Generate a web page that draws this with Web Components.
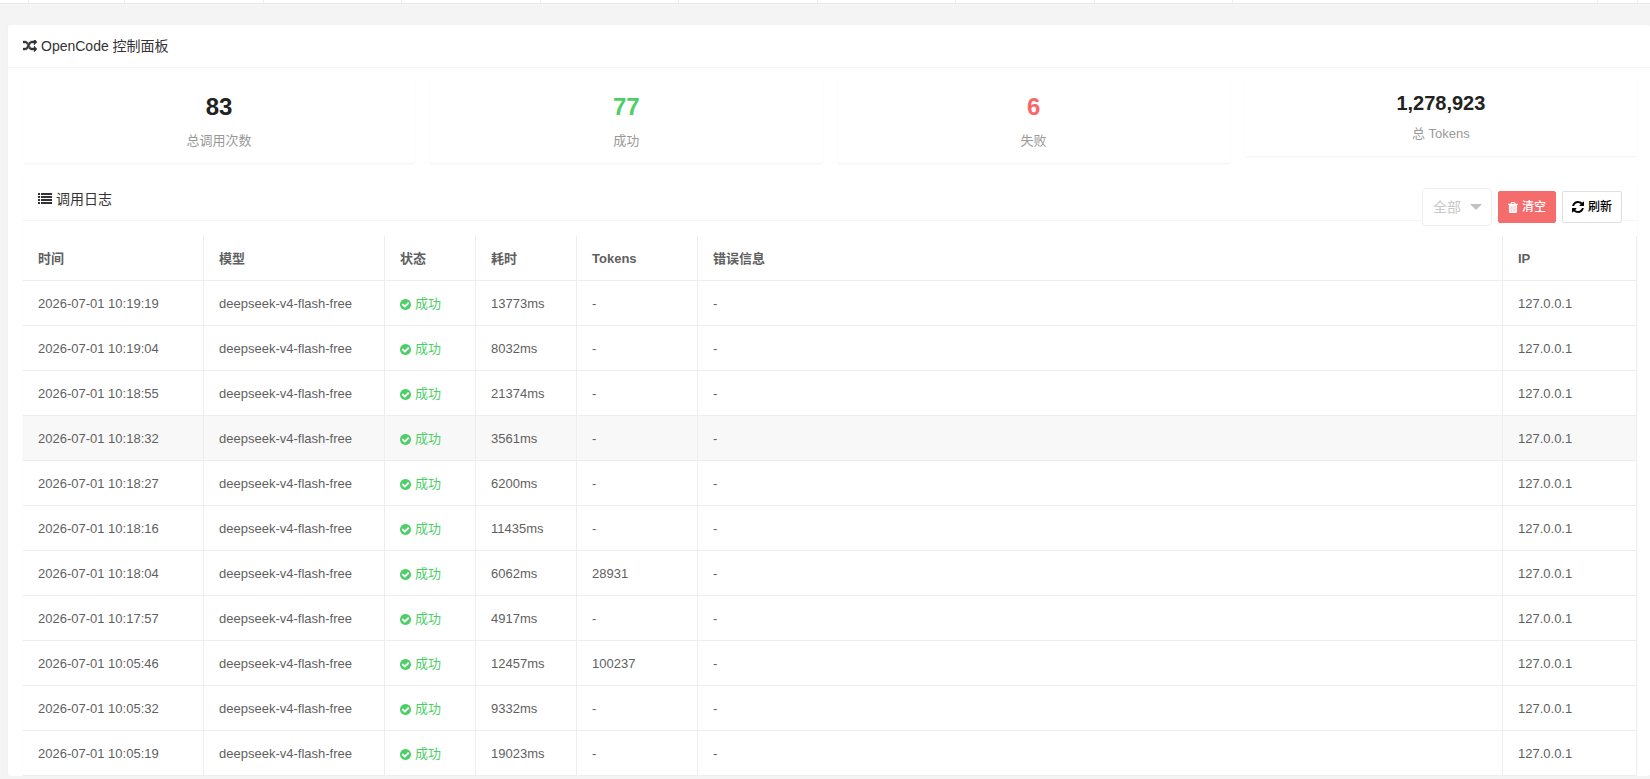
<!DOCTYPE html>
<html lang="zh-CN">
<head>
<meta charset="UTF-8">
<meta name="viewport" content="width=device-width, initial-scale=1.0">
<title>OpenCode 控制面板</title>
<style>
    body {
        margin: 0;
        background-color: #f4f4f4;
        color: #333;
        font: 14px/24px "Liberation Sans", "Noto Sans CJK SC", sans-serif;
    }

    main {
        padding: 21px 0 0 8px;
    }

    .page {
        --body-padding: 10px 13px 0 15px;
    }

    .log {
        --body-padding: 15px 0 0;
    }
</style>
</head>
<body>
    <tab-strip></tab-strip>
    <main>
        <panel-card class="page">
            <ui-icon slot="title" name="random"></ui-icon>
            <span slot="title">OpenCode 控制面板</span>
            <stat-row>
                <stat-card label="总调用次数">83</stat-card>
                <stat-card label="成功" style="--stat-color: #4dcf67">77</stat-card>
                <stat-card label="失败" style="--stat-color: #f96868">6</stat-card>
                <stat-card label="总 Tokens" compact>1,278,923</stat-card>
            </stat-row>
            <panel-card class="log">
                <ui-icon slot="title" name="list"></ui-icon>
                <span slot="title">调用日志</span>
                <log-toolbar slot="actions"></log-toolbar>
                <log-table></log-table>
            </panel-card>
        </panel-card>
    </main>

<script>
// viewBox, width, height, markup
const ICONS = {
    random: ['0 160 1792 1472', 14, 12, '<path stroke="currentColor" stroke-width="50" d="M666 481q-60 92-137 273-22-45-37-72.5t-40.5-63.5-51-56.5-63-35-81.5-14.5h-224q-14 0-23-9t-9-23v-192q0-14 9-23t23-9h224q250 0 410 225zm1126 799q0 14-9 23l-320 320q-9 9-23 9-13 0-22.5-9.5t-9.5-22.5v-192q-32 0-85 .5t-81 1-73-1-71-5-64-10.5-63-18.5-58-28.5-59-40-55-53.5-56-69.5q59-93 136-273 22 45 37 72.5t40.5 63.5 51 56.5 63 35 81.5 14.5h256v-192q0-14 9-23t23-9q12 0 24 10l319 319q9 9 9 23zm0-896q0 14-9 23l-320 320q-9 9-23 9-13 0-22.5-9.5t-9.5-22.5v-192h-256q-48 0-87 15t-69 45-51 61.5-45 77.5q-32 62-78 171-29 66-49.5 111t-54 105-64 100-74 83-90 68.5-106.5 42-128 16.5h-224q-14 0-23-9t-9-23v-192q0-14 9-23t23-9h224q48 0 87-15t69-45 51-61.5 45-77.5q32-62 78-171 29-66 49.5-111t54-105 64-100 74-83 90-68.5 106.5-42 128-16.5h256v-192q0-14 9-23t23-9q12 0 24 10l319 319q9 9 9 23z"/>'],
    list: ['0 0 14 12', 14, 12, '<path d="M0 0h2v2H0zM3 0h11v2H3zM0 3h2v2H0zM3 3h11v2H3zM0 6h2v2H0zM3 6h11v2H3zM0 9h2v2H0zM3 9h11v2H3z"/>'],
    check: ['128 128 1536 1536', 11, 11, '<path d="M1412 734q0-28-18-46l-91-90q-19-19-45-19t-45 19l-408 407-226-226q-19-19-45-19t-45 19l-91 90q-18 18-18 46 0 27 18 45l362 362q19 19 45 19 27 0 46-19l543-543q18-18 18-45zm252 162q0 209-103 385.5t-279.5 279.5-385.5 103-385.5-103-279.5-279.5-103-385.5 103-385.5 279.5-279.5 385.5-103 385.5 103 279.5 279.5 103 385.5z"/>'],
    trash: ['192 128 1408 1536', 10, 11, '<path d="M704 1376v-704q0-14-9-23t-23-9h-64q-14 0-23 9t-9 23v704q0 14 9 23t23 9h64q14 0 23-9t9-23zm256 0v-704q0-14-9-23t-23-9h-64q-14 0-23 9t-9 23v704q0 14 9 23t23 9h64q14 0 23-9t9-23zm256 0v-704q0-14-9-23t-23-9h-64q-14 0-23 9t-9 23v704q0 14 9 23t23 9h64q14 0 23-9t9-23zm-544-992h448l-48-117q-7-9-17-11h-317q-10 2-17 11zm928 32v64q0 14-9 23t-23 9h-96v948q0 83-47 143.5t-113 60.5h-832q-66 0-113-58.5t-47-141.5v-952h-96q-14 0-23-9t-9-23v-64q0-14 9-23t23-9h309l70-167q15-37 54-63t79-26h320q40 0 79 26t54 63l70 167h309q14 0 23 9t9 23z"/><path opacity=".6" d="M540 620h720v800h-720z"/>'],
    refresh: ['128 128 1536 1536', 12, 12, '<path d="M1639 1056q0 5-1 7-64 268-268 434.5t-478 166.5q-146 0-282.5-55t-243.5-157l-129 129q-19 19-45 19t-45-19-19-45v-448q0-26 19-45t45-19h448q26 0 45 19t19 45-19 45l-137 137q71 66 161 102t187 36q134 0 250-65t186-179q11-17 53-117 8-23 30-23h192q13 0 22.5 9.5t9.5 22.5zm25-800v448q0 26-19 45t-45 19h-448q-26 0-45-19t-19-45 19-45l138-138q-148-137-349-137-134 0-250 65t-186 179q-11 17-53 117-8 23-30 23h-199q-13 0-22.5-9.5t-9.5-22.5v-7q65-268 270-434.5t480-166.5q146 0 284 55.5t245 156.5l130-129q19-19 45-19t45 19 19 45z"/>'],
    caret: ['0 0 12 6', 12, 6, '<path d="M0 0h12L6 6z"/>']
};

const LOGS = [
    ['2026-07-01 10:19:19', '13773ms', '-'],
    ['2026-07-01 10:19:04', '8032ms', '-'],
    ['2026-07-01 10:18:55', '21374ms', '-'],
    ['2026-07-01 10:18:32', '3561ms', '-'],
    ['2026-07-01 10:18:27', '6200ms', '-'],
    ['2026-07-01 10:18:16', '11435ms', '-'],
    ['2026-07-01 10:18:04', '6062ms', '28931'],
    ['2026-07-01 10:17:57', '4917ms', '-'],
    ['2026-07-01 10:05:46', '12457ms', '100237'],
    ['2026-07-01 10:05:32', '9332ms', '-'],
    ['2026-07-01 10:05:19', '19023ms', '-']
];

class UiIcon extends HTMLElement {
    constructor() {
        super();
        this.attachShadow({ mode: 'open' });
    }

    connectedCallback() {
        const [viewBox, width, height, markup] = ICONS[this.getAttribute('name')];
        this.shadowRoot.innerHTML = `
            <style>
                :host {
                    display: inline-flex;
                    flex: none;
                }

                svg {
                    display: block;
                    fill: currentColor;
                }
            </style>
            <svg viewBox="${viewBox}" width="${width}" height="${height}" aria-hidden="true">${markup}</svg>
        `;
    }
}

// Bottom edge of the tab bar that sits above the page
class TabStrip extends HTMLElement {
    constructor() {
        super();
        this.attachShadow({ mode: 'open' });
        this.shadowRoot.innerHTML = `
            <style>
                :host {
                    display: flex;
                    height: 3px;
                    background-color: #fff;
                    border-bottom: 1px solid #eaeaea;
                }

                span {
                    box-sizing: border-box;
                    border-right: 1px solid #eee;
                }

                .prev {
                    width: 29px;
                }

                .home {
                    width: 96px;
                }

                .tabs {
                    display: grid;
                    grid-template-columns: repeat(8, 1fr);
                    width: 1108px;
                }

                .next {
                    width: 41px;
                    margin-left: auto;
                    margin-right: 12px;
                    border-left: 1px solid #eee;
                }
            </style>
            <span class="prev"></span>
            <span class="home"></span>
            <div class="tabs">${'<span></span>'.repeat(8)}</div>
            <span class="next"></span>
        `;
    }
}

class PanelCard extends HTMLElement {
    constructor() {
        super();
        this.attachShadow({ mode: 'open' });
        this.shadowRoot.innerHTML = `
            <style>
                :host {
                    display: block;
                    background-color: #fff;
                    border-radius: 2px;
                    box-shadow: 0 1px 2px 0 rgba(0, 0, 0, .05);
                }

                header {
                    display: flex;
                    justify-content: space-between;
                    align-items: flex-start;
                    height: 42px;
                    padding: 0 15px;
                    border-bottom: 1px solid #f6f6f6;
                }

                h2 {
                    display: flex;
                    align-items: center;
                    gap: 4px;
                    margin: 0;
                    font-size: 14px;
                    font-weight: normal;
                    line-height: 42px;
                }

                .body {
                    padding: var(--body-padding);
                }
            </style>
            <header>
                <h2><slot name="title"></slot></h2>
                <slot name="actions"></slot>
            </header>
            <div class="body"><slot></slot></div>
        `;
    }
}

class StatRow extends HTMLElement {
    constructor() {
        super();
        this.attachShadow({ mode: 'open' });
        this.shadowRoot.innerHTML = `
            <style>
                :host {
                    display: grid;
                    grid-template-columns: repeat(4, 1fr);
                    align-items: start;
                    gap: 15px;
                    margin-bottom: 15px;
                }
            </style>
            <slot></slot>
        `;
    }
}

class StatCard extends HTMLElement {
    constructor() {
        super();
        this.attachShadow({ mode: 'open' });
    }

    connectedCallback() {
        this.shadowRoot.innerHTML = `
            <style>
                :host {
                    display: block;
                    padding: 10px 15px 12px;
                    border-radius: 2px;
                    background-color: #fff;
                    box-shadow: 0 1px 2px 0 rgba(0, 0, 0, .05);
                    text-align: center;
                }

                .value {
                    color: var(--stat-color, #222);
                    font-size: 24px;
                    font-weight: bold;
                    line-height: 38px;
                }

                :host([compact]) .value {
                    font-size: 20px;
                    line-height: 31px;
                }

                .label {
                    margin-top: 5px;
                    color: #999;
                    font-size: 13px;
                    line-height: 20px;
                }
            </style>
            <div class="value"><slot></slot></div>
            <div class="label">${this.getAttribute('label')}</div>
        `;
    }
}

class LogToolbar extends HTMLElement {
    constructor() {
        super();
        this.attachShadow({ mode: 'open' });
        this.shadowRoot.innerHTML = `
            <style>
                :host {
                    display: flex;
                    align-items: center;
                    gap: 6px;
                    margin-top: 10px;
                }

                .filter {
                    display: grid;
                    align-items: center;
                }

                .filter > * {
                    grid-area: 1 / 1;
                }

                .filter ui-icon {
                    justify-self: end;
                    margin-right: 10px;
                    color: #c2c2c2;
                    pointer-events: none;
                }

                select {
                    appearance: none;
                    box-sizing: border-box;
                    width: 70px;
                    height: 38px;
                    padding: 0 10px;
                    border: 1px solid #eee;
                    border-radius: 4px;
                    background-color: #fff;
                    color: #c8c8c8;
                    font: inherit;
                }

                button {
                    display: flex;
                    align-items: center;
                    gap: 4px;
                    box-sizing: border-box;
                    height: 32px;
                    padding: 0 9px;
                    border: 1px solid #dcdfe6;
                    border-radius: 2px;
                    background-color: #fff;
                    color: #000;
                    font: inherit;
                    font-size: 12px;
                    font-weight: 500;
                }

                .danger {
                    border-color: #f56c6c;
                    background-color: #f56c6c;
                    color: #fff;
                }
            </style>
            <div class="filter">
                <select aria-label="状态">
                    <option>全部</option>
                </select>
                <ui-icon name="caret"></ui-icon>
            </div>
            <button type="button" class="danger"><ui-icon name="trash"></ui-icon>清空</button>
            <button type="button"><ui-icon name="refresh"></ui-icon>刷新</button>
        `;
    }
}

class LogTable extends HTMLElement {
    constructor() {
        super();
        this.attachShadow({ mode: 'open' });
    }

    connectedCallback() {
        const rows = LOGS.map(([time, cost, tokens], index) => `
            <tr class="${index === 3 ? 'active' : ''}">
                <td>${time}</td>
                <td>deepseek-v4-flash-free</td>
                <td><span class="ok"><ui-icon name="check"></ui-icon>成功</span></td>
                <td>${cost}</td>
                <td>${tokens}</td>
                <td>-</td>
                <td>127.0.0.1</td>
            </tr>
        `).join('');

        this.shadowRoot.innerHTML = `
            <style>
                :host {
                    display: block;
                }

                table {
                    width: 100%;
                    table-layout: fixed;
                    border-spacing: 0;
                    color: #5f5f5f;
                    font-size: 13px;
                    line-height: 24px;
                }

                th,
                td {
                    padding: 11px 15px 9px;
                    border-right: 1px solid #eee;
                    border-bottom: 1px solid #eee;
                    text-align: left;
                }

                tr:hover,
                .active {
                    background-color: #f8f8f8;
                }

                .ok {
                    display: flex;
                    align-items: center;
                    gap: 4px;
                    color: #4dcf67;
                }
            </style>
            <table>
                <colgroup>
                    <col style="width: 181px">
                    <col style="width: 181px">
                    <col style="width: 91px">
                    <col style="width: 101px">
                    <col style="width: 121px">
                    <col>
                    <col style="width: 134px">
                </colgroup>
                <thead>
                    <tr>
                        <th>时间</th>
                        <th>模型</th>
                        <th>状态</th>
                        <th>耗时</th>
                        <th>Tokens</th>
                        <th>错误信息</th>
                        <th>IP</th>
                    </tr>
                </thead>
                <tbody>${rows}</tbody>
            </table>
        `;
    }
}

customElements.define('ui-icon', UiIcon);
customElements.define('tab-strip', TabStrip);
customElements.define('panel-card', PanelCard);
customElements.define('stat-row', StatRow);
customElements.define('stat-card', StatCard);
customElements.define('log-toolbar', LogToolbar);
customElements.define('log-table', LogTable);
</script>
</body>
</html>
